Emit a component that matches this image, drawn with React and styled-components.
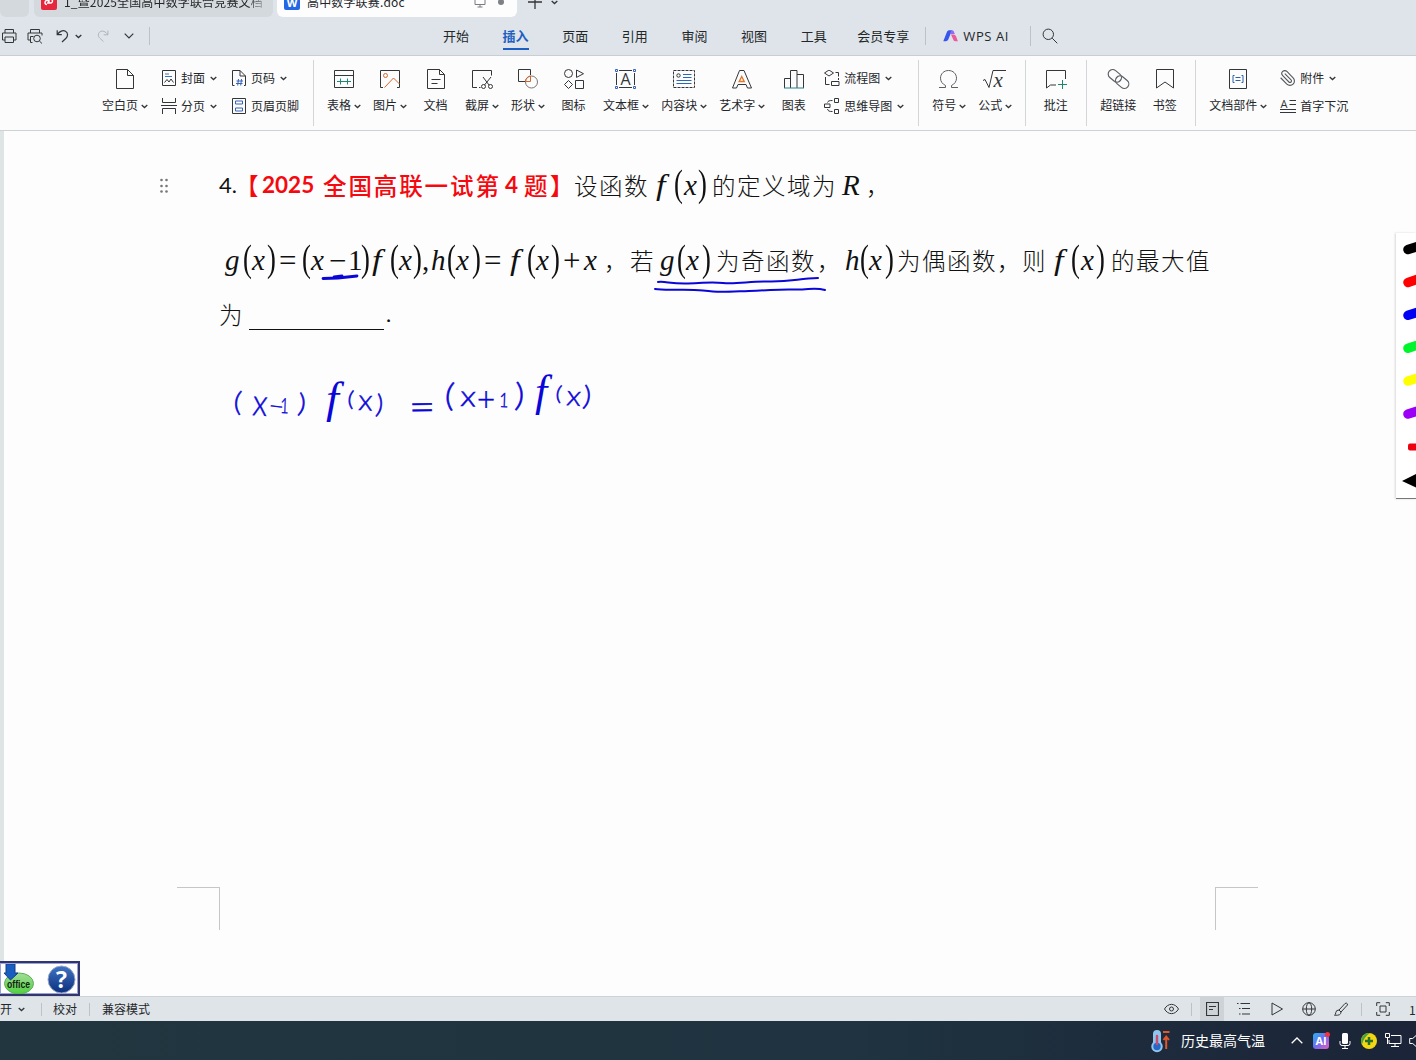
import React from "react";
import styled, { createGlobalStyle } from "styled-components";

const INK = "#0b06d8";
const LINE = "#333639";

const menus = ["开始", "插入", "页面", "引用", "审阅", "视图", "工具"];

const pens = ["#000", "#ff0000", "#0000f5", "#00f52a", "#ffff00", "#9a00f5"];

// [kind, text, width]: the width runs up to the start of the next piece
const lineOne = [
  ["num", "4.", 16],
  ["red", "【", 27],
  ["redNum", "2025", 61],
  ["red", "全国高联一试第", 182],
  ["redNum", "4", 19],
  ["red", "题", 26],
  ["red", "】", 24],
  ["cn", "设函数", 83],
  ["fn", "f", 17],
  ["par", "(", 10],
  ["it", "x", 14],
  ["par", ")", 14],
  ["cn", "的定义域为", 130],
  ["it", "R", 24],
  ["cn", "，", 24],
];

const lineTwo = [
  ["it", "g", 18],
  ["par", "(", 9],
  ["it", "x", 15],
  ["par", ")", 12],
  ["op", "=", 23],
  ["par", "(", 9],
  ["it", "x", 18],
  ["op", "−", 19],
  ["rm", "1", 13],
  ["par", ")", 12],
  ["fn", "f", 17],
  ["par", "(", 9],
  ["it", "x", 14],
  ["par", ")", 9],
  ["rm", ",", 9],
  ["it", "h", 16],
  ["par", "(", 9],
  ["it", "x", 16],
  ["par", ")", 12],
  ["op", "=", 27],
  ["fn", "f", 16],
  ["par", "(", 9],
  ["it", "x", 15],
  ["par", ")", 12],
  ["op", "+", 21],
  ["it", "x", 20],
  ["cn", "，", 26],
  ["cn", "若", 30],
  ["it", "g", 17],
  ["par", "(", 9],
  ["it", "x", 16],
  ["par", ")", 14],
  ["cn", "为奇函数", 101],
  ["cn", "，", 28],
  ["it", "h", 15],
  ["par", "(", 9],
  ["it", "x", 16],
  ["par", ")", 12],
  ["cn", "为偶函数", 100],
  ["cn", "，", 25],
  ["cn", "则", 33],
  ["fn", "f", 16],
  ["par", "(", 10],
  ["it", "x", 15],
  ["par", ")", 15],
  ["cn", "的最大值", 100],
];

// handwriting: [character, x, baseline, size, horizontal scale, rotation, font]
const handwriting = [
  ["(", 233, 411, 27, 1.2, 4],
  ["x", 252, 415, 37, 0.85, 4],
  ["−", 268, 413, 22, 1.2, 6],
  ["1", 280, 413, 21, 0.7, 2],
  [")", 297, 412, 26, 1.2, 6],
  ["f", 326, 413, 44, 1.05, 0, "serif"],
  ["(", 347, 406, 21, 1.2, 4],
  ["x", 358, 410, 29, 1.05, 2],
  [")", 375, 413, 26, 1.1, 6],
  ["=", 409, 421, 40, 1.15, -1],
  ["(", 444, 406, 32, 1.2, 4],
  ["x", 460, 406, 29, 1.15, 2],
  ["+", 477, 411, 33, 0.95, 0],
  ["1", 499, 407, 20, 0.8, 2],
  [")", 514, 406, 32, 1.2, 3],
  ["f", 535, 406, 44, 1, 0, "serif"],
  ["(", 555, 400, 20, 1.2, 6],
  ["x", 566, 405, 28, 1.1, 4],
  [")", 582, 405, 27, 1.2, 6],
];

const Chevron = ({ size = 7, color = LINE }) => (
  <Svg width={size} height="5" viewBox="0 0 7 5" $color={color}>
    <path d="M0.7 1l2.8 2.6L6.3 1" strokeWidth="1.3" />
  </Svg>
);

const Tool = ({ label, drop, tight, children }) => (
  <ToolButton $tight={tight}>
    <Svg width="25" height="22" viewBox="0 0 25 22">
      {children}
    </Svg>
    <ToolLabel>
      {label}
      {drop && <Chevron />}
    </ToolLabel>
  </ToolButton>
);

const SmallTool = ({ label, drop, children }) => (
  <SmallButton>
    <Svg width="16" height="16" viewBox="0 0 16 16">
      {children}
    </Svg>
    <span>{label}</span>
    {drop && <Chevron />}
  </SmallButton>
);

const Formula = ({ items, height, left, lift }) => (
  <Line $height={height} $left={left} $lift={lift}>
    {items.map(([kind, text, width], i) => (
      <Piece key={i} $kind={kind} $width={width}>
        {text}
      </Piece>
    ))}
  </Line>
);

const TabStrip = () => (
  <Tabs>
    <Tab $width={29} $gap={5} />
    <Tab $width={239} $gap={4}>
      <TabBadge $bg="#e5263c">
        <Svg width="12" height="12" viewBox="0 0 12 12" $color="#fff">
          <path d="M4 8.5a2 2 0 1 1 2-2V3.2h1.6a1.8 1.8 0 0 1 0 3.8H4" strokeWidth="1.4" />
        </Svg>
      </TabBadge>
      <TabName $fade>1_暨2025全国高中数学联合竞赛文档</TabName>
    </Tab>
    <Tab $width={240} $gap={11} $active>
      <TabBadge $bg="#2467e6">W</TabBadge>
      <TabName>高中数学联赛.doc</TabName>
      <Svg width="12" height="12" viewBox="0 0 12 12" $color="#777b80">
        <path d="M1 1h10v7.5H1zM3.5 11h5M6 8.5V11" />
      </Svg>
      <Dot />
    </Tab>
    <Svg width="14" height="14" viewBox="0 0 14 14">
      <path d="M0 7h14M7 0v14" strokeWidth="1.3" />
    </Svg>
    <TabMore>
      <Chevron />
    </TabMore>
  </Tabs>
);

const MenuBar = () => (
  <Menu>
    <QuickTools>
      <Svg width="16" height="16" viewBox="0 0 16 16">
        <path d="M4 5V1.500h8.500V5M4 12H1.500V5h13.500v7H12.500M4 9h8.500v5.500H4z" />
      </Svg>
      <Svg width="16" height="16" viewBox="0 0 16 16">
        <path d="M3.500 5V1.500h9V5M3.500 12H1V5h14v2.500M5.500 14.500H3.500V8.500h3" />
        <circle cx="10" cy="10.500" r="3.300" />
        <path d="M12.400 13l2.600 2.500" />
      </Svg>
      <Svg width="13" height="14" viewBox="0 0 13 14">
        <path d="M1.200 1.200v4.500h4.600M1.500 5.400C3.500 2.200 7 .800 9.500 2.300c3 1.900 2.300 5.200.500 7L6 13" strokeWidth="1.200" />
      </Svg>
      <Chevron />
      <Svg width="12" height="14" viewBox="0 0 13 14" $color="#abb0b5">
        <path d="M11.800 1.200v4.500H7.200M11.500 5.400C9.500 2.200 6 .800 3.500 2.300c-3 1.900-2.300 5.200-.5 7L7 13" />
      </Svg>
      <Svg width="10" height="6" viewBox="0 0 10 6">
        <path d="M.7.700L5 5 9.300.700" strokeWidth="1.200" />
      </Svg>
      <Divider $height={18} />
    </QuickTools>
    <MenuList>
      {menus.map((name) => (
        <MenuItem key={name} $active={name === "插入"}>
          {name}
        </MenuItem>
      ))}
    </MenuList>
    <MenuItem>会员专享</MenuItem>
    <AiArea>
      <Divider $height={18} />
      <AiButton>
        <svg width="15" height="12" viewBox="0 0 15 12">
          <path d="M4 1.800Q4.600.300 6 .300H9L5.300 9.500Q4.600 11.300 2.800 11.300H.300z" fill="#3656ee" />
          <path d="M8.300.300h.700q1.300 0 1.800 1.200L11.800 4H6.900z" fill="#8f6cf0" />
          <path d="M8 4.600h2.500q1.800 0 2.500 1.600l1.900 5h-2.400q-1.600 0-2.200-1.500z" fill="#ee5a9c" />
        </svg>
        WPS AI
      </AiButton>
      <Divider $height={20} />
      <Svg width="16" height="16" viewBox="0 0 16 16">
        <circle cx="6.300" cy="6.300" r="5.200" />
        <path d="M10.200 10.200L15.300 15.300" />
      </Svg>
    </AiArea>
  </Menu>
);

const Ribbon = () => (
  <RibbonBar>
    <Tool label="空白页" drop>
      <path d="M4.500 1.500h11l6 6v13h-17zM15.500 1.500v6h6" />
    </Tool>
    <Stack>
      <SmallTool label="封面" drop>
        <path d="M1.500.500h13v15h-13z" />
        <path d="M4 4h4M4 6.500h7" stroke="#3f73b5" />
        <path d="M3.500 12.500l2.500-3 2 2.500 2-3 2.500 3.500" />
      </SmallTool>
      <SmallTool label="分页" drop>
        <path d="M1.500 0v4.500h13V0M1.500 16v-5.500h13V16M0 7.500h16" />
      </SmallTool>
    </Stack>
    <Stack $right={7}>
      <SmallTool label="页码" drop>
        <path d="M3.500 15.500h-2V.500h7.500l5.500 5.500v9.500h-1.500M9 .500v5.500h5.500" />
        <path d="M7.500 9l-.8 6.500M10.500 9l-.8 6.500M5.500 11h6.500M5 13.500h6.500" stroke="#3763b8" />
      </SmallTool>
      <SmallTool label="页眉页脚">
        <path d="M1.500.500h13v15h-13z" />
        <path d="M4.500 3h7v3h-7zM4.500 10h7v3h-7z" stroke="#3763b8" />
      </SmallTool>
    </Stack>
    <RibbonDivider />
    <Tool label="表格" drop>
      <path d="M3.500 2.500h19v17h-19zM3.500 7.500h19" />
      <path d="M6 13.500h14M9.500 10.500v6M16.500 10.500v6" stroke="#1e8a72" />
    </Tool>
    <Tool label="图片" drop>
      <path d="M6 19.500H3.500v-17h19v17h-2.500" />
      <circle cx="8.500" cy="7.500" r="2" stroke="#d9622b" />
      <path d="M7.500 19.500l9-9.500 6 6" stroke="#d9622b" />
    </Tool>
    <Tool label="文档">
      <path d="M4.500 1.500h12l5 5v14h-17zM16.500 1.500v5h5M8.500 11.500h9M8.500 15.500h6" />
    </Tool>
    <Tool label="截屏" drop>
      <path d="M8 19.500H3.500v-17h19v5M10 19.500h1.500M14 9l6 8M22 9l-6.500 8" />
      <circle cx="14.500" cy="18.500" r="2" />
      <circle cx="21.500" cy="18.500" r="2" />
    </Tool>
    <Tool label="形状" drop>
      <path d="M10 13.500H3.500v-12h12V7" />
      <circle cx="16.500" cy="14" r="6" stroke="#777" />
      <path d="M10.500 13.500c0-3 2-5 5-5.500v5.500z" stroke="#d9622b" />
    </Tool>
    <Tool label="图标">
      <circle cx="7.500" cy="5.500" r="4" />
      <path d="M15.500 2l7 3.700-7 3.700zM7.500 12.500l4 4-4 4-4-4zM14.500 12.500h8v8h-8z" />
    </Tool>
    <Tool label="文本框" drop>
      <path d="M6 2.500h13M6 19.500h13M3.500 5v12M21.500 5v12" />
      <path d="M2.500 1.500h2v2h-2zM20.500 1.500h2v2h-2zM2.500 18.500h2v2h-2zM20.500 18.500h2v2h-2z" stroke="#3763b8" />
      <IconText x="12.500" y="17" textAnchor="middle" $size={16}>
        A
      </IconText>
    </Tool>
    <Tool label="内容块" drop>
      <path d="M2.500 2.500h21v17h-21z" strokeDasharray="3 1" />
      <circle cx="7.500" cy="7.500" r="1.700" />
      <path d="M12 6.500h8.500M12 9.500h8.500M5.500 12.500h15M5.500 15.500h15" stroke="#2c66b8" />
    </Tool>
    <Tool label="艺术字" drop>
      <path d="M3.500 20L10.500 2.500h4.500L22.500 20h-4l-1.500-3.500H9L7.500 20z" />
      <path d="M12.700 8.500l2.500 5h-5z" stroke="#e07a2f" strokeWidth="1.400" />
    </Tool>
    <Tool label="图表">
      <path d="M3.500 20v-9.500h6M9.500 20V2.500h6.500V20M16 6.500h6.500V20" />
      <path d="M3 20h20" stroke="#26828a" />
    </Tool>
    <Stack>
      <SmallTool label="流程图" drop>
        <path d="M5 0l4.500 3L5 6 .5 3zM11.500 2.500h3v4M14.500 8v2M1.500 7v7.500h4M7.500 11.500h7.500v4H7.500z" />
      </SmallTool>
      <SmallTool label="思维导图" drop>
        <path d="M10.500.500h4v4h-4zM10.500 11.500h4v4h-4zM.5 6h5.500v3.500H.500zM3.500 4.500C4 3 5 2.500 8.500 2.500M3.500 11c.5 2 1.500 2.500 5 2.500" />
      </SmallTool>
    </Stack>
    <RibbonDivider />
    <Tool label="符号" drop>
      <path d="M3 19.500h6.500v-2C6.500 16 4.500 13.500 4.500 10.200c0-4.500 3.500-7.700 8-7.700s8 3.200 8 7.700c0 3.300-2 5.800-5 7.300v2H22" stroke="#5c6064" />
    </Tool>
    <Tool label="公式" drop>
      <path d="M1 12.500l2-1 4 8L11 2.500h13" />
      <IconText x="11.500" y="19" $size={21} $serif>
        x
      </IconText>
    </Tool>
    <RibbonDivider />
    <Tool label="批注">
      <path d="M22.500 11V2.500h-19v17.500l4-3h5.500" />
      <path d="M15 16.500h9M19.500 12v9" stroke="#178a6c" />
    </Tool>
    <RibbonDivider />
    <Tool label="超链接" tight>
      <g stroke="#5c6064" strokeWidth="1.200">
        <rect x="1.500" y="3.500" width="14.500" height="9" rx="4.500" transform="rotate(40 9 8)" />
        <rect x="9" y="9.500" width="14.500" height="9" rx="4.500" transform="rotate(40 16 14)" />
      </g>
    </Tool>
    <Tool label="书签">
      <path d="M4.500 1.500h17v18.500l-8.500-6-8.500 6z" />
    </Tool>
    <RibbonDivider />
    <Tool label="文档部件" drop>
      <path d="M4.500 1.500h17v19h-17z" />
      <path d="M9.500 7.500h-1.500v7h1.500M16.500 7.500h1.500v7h-1.500M10.500 9.500h5M10.500 12.500h5" stroke="#2c5fae" />
    </Tool>
    <Stack>
      <SmallTool label="附件" drop>
        <path
          d="m16 6-8.414 8.586a2 2 0 0 0 2.829 2.829l8.414-8.586a4 4 0 1 0-5.657-5.657l-8.379 8.551a6 6 0 1 0 8.485 8.485l8.379-8.551"
          transform="scale(-0.74 0.74) translate(-22.500 -1.200)"
          stroke="#55595d"
          strokeWidth="1.500"
        />
      </SmallTool>
      <SmallTool label="首字下沉">
        <IconText x="0.500" y="10" $size={11}>
          A
        </IconText>
        <path d="M9.500 2.500H16M9.500 6.500H16M0 11.500h16M0 14.500h16" />
      </SmallTool>
    </Stack>
  </RibbonBar>
);

const InkLayer = () => (
  <Ink width="700" height="330" viewBox="200 150 700 330">
    <path d="M323 278.500L338 278 357 276M334 277l8-1" strokeWidth="2.800" />
    <path d="M658 282c8-1 12 2 30 1.500s22-2 35-.5 28-2 45-1.500c24 .5 30-3 50-3.500" />
    <path d="M655 289c12 2 30-.5 48 1.500s20 1.500 46 .5 30-2 45-1.500 20-2.500 31 .5" />
    {handwriting.map(([char, x, y, size, scale, turn, font], i) => (
      <InkText
        key={i}
        $size={size}
        $serif={font === "serif"}
        transform={`translate(${x} ${y}) rotate(${turn}) scale(${scale} 1)`}
      >
        {char}
      </InkText>
    ))}
  </Ink>
);

const Editor = () => (
  <Workspace>
    <Page>
      <FirstLine>
        <Svg width="8" height="16" viewBox="0 0 8 16">
          {[2, 8, 13.500].map((y) => (
            <g key={y} fill="#777" stroke="none">
              <circle cx="1.500" cy={y} r="1.300" />
              <circle cx="6.500" cy={y} r="1.300" />
            </g>
          ))}
        </Svg>
        <Formula items={lineOne} height={60} left={51} lift={2} />
      </FirstLine>
      <Formula items={lineTwo} height={90} left={221} lift={2} />
      <Line $height={20} $left={215} $lift={4}>
        <Piece $kind="cn" $width={30}>
          为
        </Piece>
        <Blank />
        <Piece $kind="num" $width={10}>
          .
        </Piece>
      </Line>
      <Corners>
        <Corner />
        <Corner $right />
      </Corners>
    </Page>
    <InkLayer />
    <PenPanel>
      <svg width="20" height="262" viewBox="1396 235 20 262">
        {pens.map((color, i) => (
          <path
            key={color}
            d={`M1408 ${249.500 + i * 32.900}l14-4.500`}
            stroke={color}
            strokeWidth="9.500"
            strokeLinecap="round"
          />
        ))}
        <rect x="1408" y="443.500" width="14" height="7" rx="2" fill="#ee0010" />
        <path d="M1402 481l14-7v13.500z" fill="#000" />
      </svg>
    </PenPanel>
    <OfficeFloat>
      <svg width="76" height="30" viewBox="0 0 76 30">
        <defs>
          <linearGradient id="leaf" x1="0" y1="0" x2="0" y2="1">
            <stop offset="0" stopColor="#a5dc9a" />
            <stop offset="1" stopColor="#4fd13f" />
          </linearGradient>
          <linearGradient id="globe" x1="0" y1="0" x2="0" y2="1">
            <stop offset="0" stopColor="#3f74c4" />
            <stop offset="1" stopColor="#0c2f7c" />
          </linearGradient>
        </defs>
        <ellipse cx="19" cy="19.500" rx="14.500" ry="10.500" fill="url(#leaf)" stroke="#5fae58" />
        <path d="M6 0h9v9h3L10.500 16 4 9h2z" fill="#1a5fc0" stroke="#123f8c" />
        <OfficeText x="7" y="24" textLength="23" lengthAdjust="spacingAndGlyphs">
          office
        </OfficeText>
        <circle cx="61.500" cy="15.500" r="13.500" fill="url(#globe)" stroke="#9aa9c4" />
        <HelpText x="61.500" y="23.500" textAnchor="middle">
          ?
        </HelpText>
      </svg>
    </OfficeFloat>
  </Workspace>
);

const StatusBar = () => (
  <Status>
    <StatusText $width={18}>开</StatusText>
    <Chevron />
    <Divider $height={13} $left={16} $right={11} />
    <StatusText $width={36}>校对</StatusText>
    <Divider $height={13} $right={12} />
    <StatusText>兼容模式</StatusText>
    <ViewTools>
      <Svg width="15" height="14" viewBox="0 0 15 14">
        <path d="M.5 7C4 0.800 11 .800 14.500 7 11 13.200 4 13.200.500 7z" />
        <circle cx="7.500" cy="7" r="2" />
      </Svg>
      <Divider $height={13} $left={12} $right={8} />
      <ViewActive>
        <Svg width="13" height="14" viewBox="0 0 13 14">
          <path d="M.5.500h12v13H.500zM3 4.500h7M3 7.500h4" strokeWidth="1.200" />
        </Svg>
      </ViewActive>
      <ViewIcon $width={13} $left={13}>
        <path d="M0 1.500h1.500M3.500 1.500H13M2 6.500h1.500M5 6.500h8M2 12h1.500M5 12h8" />
      </ViewIcon>
      <ViewIcon $width={12} $left={21}>
        <path d="M1 1l10.500 6L1 13z" />
      </ViewIcon>
      <ViewIcon $width={14} $left={19}>
        <circle cx="7" cy="7" r="6.300" />
        <ellipse cx="7" cy="7" rx="2.700" ry="6.300" />
        <path d="M.7 7h12.600" />
      </ViewIcon>
      <ViewIcon $width={14} $left={18}>
        <path d="M5 8L11 1.500q1.500-1 2.300.300t-.8 2.200L7 10M5 8q-3 0-3.200 2.500T.5 13.200q3.500.300 5-.5T7 10z" />
      </ViewIcon>
      <Divider $height={13} $left={13} $right={14} />
      <ViewIcon $width={14}>
        <path d="M.7 4V.700h3.500M9.800.700h3.500V4M13.300 10v3.300H9.800M4.200 13.300H.700V10M4 4h6v6H4z" />
      </ViewIcon>
      <Zoom>1</Zoom>
    </ViewTools>
  </Status>
);

const Taskbar = () => (
  <Dock>
    <svg width="20" height="24" viewBox="0 0 20 24">
      <path d="M6 5v12" stroke="#8fc6ee" strokeWidth="8" strokeLinecap="round" />
      <circle cx="6" cy="17.500" r="5.700" fill="#8fc6ee" />
      <circle cx="6" cy="17.500" r="3.700" fill="#2469c8" />
      <path d="M6 15V7" stroke="#c94d6a" strokeWidth="2.500" strokeLinecap="round" />
      <path d="M12 3h6.500M15.200 20V9M12.500 11l2.700-3.500L18 11" stroke="#e2562c" strokeWidth="2" fill="none" />
    </svg>
    <Weather>历史最高气温</Weather>
    <Svg width="12" height="7" viewBox="0 0 12 7" $color="#fff">
      <path d="M.7 6.300L6 1l5.300 5.300" strokeWidth="1.300" />
    </Svg>
    <AiTray>
      AI
      <AlertDot />
    </AiTray>
    <svg width="12" height="16" viewBox="0 0 12 16">
      <rect x="3" y="0" width="6" height="11" rx="1.500" fill="#fff" />
      <path d="M1 8v2.500q0 2 2 2h6q2 0 2-2V8M6 12.500v3M3 15.500h6" stroke="#fff" fill="none" />
    </svg>
    <TrayShield width="16" height="16" viewBox="0 0 16 16">
      <circle cx="8" cy="8" r="8" fill="#f3d713" />
      <path d="M1 11.500A8 8 0 0 1 9 .100Q3 4 1 11.500z" fill="#4aa53c" />
      <path d="M8 4v8M4 8h8" stroke="#26702c" strokeWidth="2.500" />
    </TrayShield>
    <TrayNet width="17" height="15" viewBox="0 0 17 15" $color="#fff">
      <path d="M6 2.500h10v8H4V7M10 10.500v3M6 13.500h8M.5.500h4v4h-4zM2.500 4.500V11" />
    </TrayNet>
    <TraySound width="12" height="16" viewBox="0 0 12 16" $color="#fff">
      <path d="M.7 5.500h3l4.500-4v13l-4.500-4h-3z" />
    </TraySound>
  </Dock>
);

const App = () => (
  <Shell>
    <GlobalStyle />
    <TabStrip />
    <MenuBar />
    <Ribbon />
    <Editor />
    <StatusBar />
    <Taskbar />
  </Shell>
);

const GlobalStyle = createGlobalStyle`
  * {
    box-sizing: border-box;
  }

  body {
    margin: 0;
    overflow: hidden;
    font-family: "Noto Sans CJK SC", sans-serif;
    color: #24272a;
  }
`;

const Shell = styled.div`
  display: flex;
  flex-direction: column;
  width: 1416px;
  height: 1060px;
  overflow: hidden;
  background: #dee4e9;
`;

const Svg = styled.svg`
  flex: none;
  fill: none;
  stroke: ${({ $color }) => $color || LINE};
`;

const IconText = styled.text`
  font-family: ${({ $serif }) =>
    $serif ? '"Liberation Serif", serif' : '"Open Sans", sans-serif'};
  font-style: ${({ $serif }) => ($serif ? "italic" : "normal")};
  font-size: ${({ $size }) => $size}px;
  fill: ${LINE};
  stroke: none;
`;

const Divider = styled.span`
  flex: none;
  width: 1px;
  height: ${({ $height }) => $height}px;
  margin-left: ${({ $left }) => $left || 0}px;
  margin-right: ${({ $right }) => $right || 0}px;
  background: #bcc2c8;
`;

const Tabs = styled.div`
  display: flex;
  align-items: flex-end;
  height: 17px;
  flex: none;
  overflow: hidden;

  > svg {
    margin-bottom: 8px;
  }
`;

const Tab = styled.div`
  display: flex;
  align-items: center;
  flex: none;
  width: ${({ $width }) => $width}px;
  height: 30px;
  margin-right: ${({ $gap }) => $gap}px;
  padding: 0 0 0 7px;
  border-radius: 6px;
  background: ${({ $active }) => ($active ? "#fdfdfe" : "#d3d9dd")};

  > svg {
    margin-left: auto;
  }
`;

const TabBadge = styled.span`
  display: flex;
  align-items: center;
  justify-content: center;
  flex: none;
  width: 16px;
  height: 16px;
  margin-right: 7px;
  border-radius: 2px;
  background: ${({ $bg }) => $bg};
  color: #fff;
  font: bold 11px "Open Sans", sans-serif;
`;

const TabName = styled.span`
  max-width: 204px;
  font-size: 12px;
  line-height: 18px;
  letter-spacing: 0.15px;
  white-space: nowrap;
  mask-image: ${({ $fade }) =>
    $fade ? "linear-gradient(90deg, #000 92%, rgba(0, 0, 0, 0.3))" : "none"};
`;

const Dot = styled.span`
  width: 6px;
  height: 6px;
  margin: 0 13px 0 12px;
  border-radius: 50%;
  background: #7d8186;
`;

const TabMore = styled.span`
  display: flex;
  align-self: flex-start;
  margin-left: 9px;
`;

const Menu = styled.div`
  display: flex;
  align-items: center;
  flex: none;
  height: 39px;
  border-bottom: 1px solid #c9ced2;
`;

const QuickTools = styled.div`
  display: flex;
  align-items: center;
  width: 443px;
  padding-left: 1px;

  > :nth-child(2) {
    margin-left: 10px;
  }

  > :nth-child(3) {
    margin-left: 13px;
  }

  > :nth-child(4) {
    margin-left: 6px;
  }

  > :nth-child(5) {
    margin-left: 15px;
  }

  > :nth-child(6) {
    margin-left: 15px;
  }

  > :nth-child(7) {
    margin-left: 15px;
  }
`;

const MenuList = styled.div`
  display: flex;
  gap: 33.6px;
  margin-right: 30.6px;
`;

const MenuItem = styled.div`
  font-size: 13px;
  line-height: 20px;
  padding: 3px 0 2px;
  white-space: nowrap;
  border-bottom: 2px solid ${({ $active }) => ($active ? "#1d5fc2" : "transparent")};
  color: ${({ $active }) => ($active ? "#1d5fc2" : "inherit")};
  font-weight: ${({ $active }) => ($active ? 700 : 400)};
`;

const AiArea = styled.div`
  display: flex;
  align-items: center;
  margin-left: 16px;

  > :last-child {
    margin-left: 11px;
  }
`;

const AiButton = styled.div`
  display: flex;
  align-items: center;
  gap: 5px;
  width: 104px;
  padding-left: 17px;
  font: 13px "Open Sans", sans-serif;
  letter-spacing: 0.6px;
  white-space: nowrap;
`;

const RibbonBar = styled.div`
  display: flex;
  flex: none;
  height: 75px;
  padding-left: 96px;
  background: #fcfcfd;
  border-bottom: 1px solid #cfd2d4;
  font-size: 12px;
`;

const ToolButton = styled.div`
  display: flex;
  flex-direction: column;
  align-items: center;
  flex: none;
  min-width: 46px;
  padding: 12px ${({ $tight }) => ($tight ? 6 : 7)}px 0 6px;
`;

const ToolLabel = styled.div`
  display: flex;
  align-items: center;
  margin-top: 7px;
  line-height: 16px;
  white-space: nowrap;

  svg {
    margin: 2px -1px 0 3px;
  }
`;

const Stack = styled.div`
  display: flex;
  flex-direction: column;
  flex: none;
  padding-top: 8px;
  margin: 0 ${({ $right = 8 }) => $right}px 0 7px;
`;

const SmallButton = styled.div`
  display: flex;
  align-items: center;
  height: 28px;
  line-height: 16px;
  white-space: nowrap;

  span {
    margin: -1px 5px 0 4px;
  }

  span:last-child {
    margin-right: 0;
  }

  span + svg {
    margin-right: -1px;
  }
`;

const RibbonDivider = styled.span`
  flex: none;
  width: 1px;
  height: 66px;
  margin: 4px 7px 0;
  background: #d3d5d7;
`;

const Workspace = styled.div`
  position: relative;
  flex: none;
  height: 865px;
  border-left: 4px solid #dfe5e4;
  background: #fdfdfd;
`;

const Page = styled.div`
  display: flex;
  flex-direction: column;
  height: 100%;
  padding-top: 25px;
`;

const FirstLine = styled.div`
  display: flex;
  align-items: center;
  padding-left: 156px;
`;

const Line = styled.div`
  display: flex;
  align-items: center;
  flex: none;
  height: ${({ $height }) => $height}px;
  padding-left: ${({ $left }) => $left}px;
  padding-bottom: ${({ $lift }) => $lift || 0}px;
  color: #111;
`;

const kinds = {
  cn: `
    font: 300 23.5px/36px "Noto Sans CJK SC", sans-serif;
    letter-spacing: 1.5px;
  `,
  red: `
    font: 500 23.5px/36px "Noto Sans CJK SC", sans-serif;
    letter-spacing: 1.9px;
    color: #f5090f;
  `,
  num: `
    font: 22px/36px Lato, sans-serif;
  `,
  redNum: `
    font: 700 22.5px/36px Lato, sans-serif;
    color: #f5090f;
  `,
  it: `
    font: italic 29px/36px "Liberation Serif", serif;
  `,
  fn: `
    font: italic 29px/36px "Liberation Serif", serif;
    transform: translateX(-1px) scaleX(1.18);
    transform-origin: left;
  `,
  rm: `
    font: 29px/36px "Liberation Serif", serif;
  `,
  op: `
    font: 31px/36px "Liberation Serif", serif;
    margin-top: 1px;
  `,
  par: `
    font: 38px/36px "Liberation Serif", serif;
    margin-top: -4px;
    transform: scaleX(0.7);
    transform-origin: left;
  `,
};

const Piece = styled.span`
  display: block;
  flex: none;
  width: ${({ $width }) => $width}px;
  white-space: nowrap;
  ${({ $kind }) => kinds[$kind]}
`;

const Blank = styled.span`
  width: 135px;
  height: 26px;
  margin: 6px 2px 0 0;
  border-bottom: 1px solid #111;
`;

const Corners = styled.div`
  display: flex;
  justify-content: space-between;
  width: 1081px;
  margin: auto 0 66px 173px;
`;

const Corner = styled.span`
  width: 43px;
  height: 43px;
  border-top: 1px solid #c6c6c6;
  border-right: ${({ $right }) => ($right ? "none" : "1px solid #c6c6c6")};
  border-left: ${({ $right }) => ($right ? "1px solid #c6c6c6" : "none")};
`;

const Ink = styled.svg`
  position: absolute;
  left: 196px;
  top: 19px;
  fill: none;
  stroke: ${INK};
  stroke-width: 2;
  stroke-linecap: round;
`;

const InkText = styled.text`
  font-family: ${({ $serif }) =>
    $serif ? '"Liberation Serif", serif' : "Lato, sans-serif"};
  font-style: ${({ $serif }) => ($serif ? "italic" : "normal")};
  font-weight: 300;
  font-size: ${({ $size }) => $size}px;
  fill: ${INK};
  stroke-width: ${({ $serif }) => ($serif ? 0 : 0.5)};
`;

const PenPanel = styled.div`
  position: absolute;
  top: 102px;
  right: 0;
  width: 20px;
  height: 266px;
  padding-top: 2px;
  background: #fff;
  border-bottom: 1px solid #777;
  box-shadow: -1px 0 2px rgba(0, 0, 0, 0.15);
`;

const OfficeFloat = styled.div`
  position: absolute;
  left: -4px;
  bottom: 0;
  width: 80px;
  height: 35px;
  padding: 1px 0 0;
  background: #fff;
  border: 2px solid #31366f;
  border-left: 0;
  box-shadow: inset 0 0 0 1px #9aa2d8;

  svg {
    display: block;
  }
`;

const OfficeText = styled.text`
  font: bold 11px "Liberation Sans", sans-serif;
  fill: #10240e;
`;

const HelpText = styled.text`
  font: bold 23px "Open Sans", sans-serif;
  fill: #fff;
`;

const Status = styled.div`
  display: flex;
  align-items: center;
  flex: none;
  height: 25px;
  border-top: 1px solid #ced3d6;
  background: #dfe4e9;
  font-size: 12px;
`;

const StatusText = styled.span`
  flex: none;
  width: ${({ $width }) => ($width ? `${$width}px` : "auto")};
  line-height: 16px;
  white-space: nowrap;
`;

const ViewTools = styled.div`
  display: flex;
  align-items: center;
  align-self: stretch;
  width: 252px;
  margin-left: auto;
`;

const ViewActive = styled.span`
  display: flex;
  align-items: center;
  justify-content: center;
  flex: none;
  align-self: stretch;
  width: 24px;
  background: #cdd3d7;
`;

const ViewIcon = styled(Svg).attrs(({ $width }) => ({
  width: $width,
  height: 14,
  viewBox: `0 0 ${$width} 14`,
}))`
  margin-left: ${({ $left }) => $left || 0}px;
`;

const Zoom = styled.span`
  margin-left: 19px;
`;

const Dock = styled.div`
  display: flex;
  align-items: center;
  flex: none;
  height: 39px;
  padding-left: 1151px;
  background: linear-gradient(90deg, #21363f, #1f3340 60%, #1b2438);

  > svg {
    flex: none;
  }
`;

const Weather = styled.span`
  flex: none;
  width: 110px;
  padding-left: 10px;
  margin: -2px 10px 0 0;
  color: #fff;
  font-size: 14px;
  line-height: 20px;
  white-space: nowrap;
`;

const AiTray = styled.span`
  position: relative;
  flex: none;
  width: 16px;
  height: 16px;
  margin: 0 10px 0 10px;
  border-radius: 3px;
  background: linear-gradient(135deg, #28b6f0, #6f6bf0 50%, #e55fc0);
  color: #fff;
  font: bold 11px/16px "Open Sans", sans-serif;
  text-align: center;
`;

const AlertDot = styled.span`
  position: absolute;
  top: -1px;
  right: -1px;
  width: 5px;
  height: 5px;
  border-radius: 50%;
  background: #f0333c;
`;

const TrayShield = styled.svg`
  margin-left: 10px;
`;

const TrayNet = styled(Svg)`
  margin-left: 8px;
`;

const TraySound = styled(Svg)`
  margin-left: 7px;
`;

export default App;
